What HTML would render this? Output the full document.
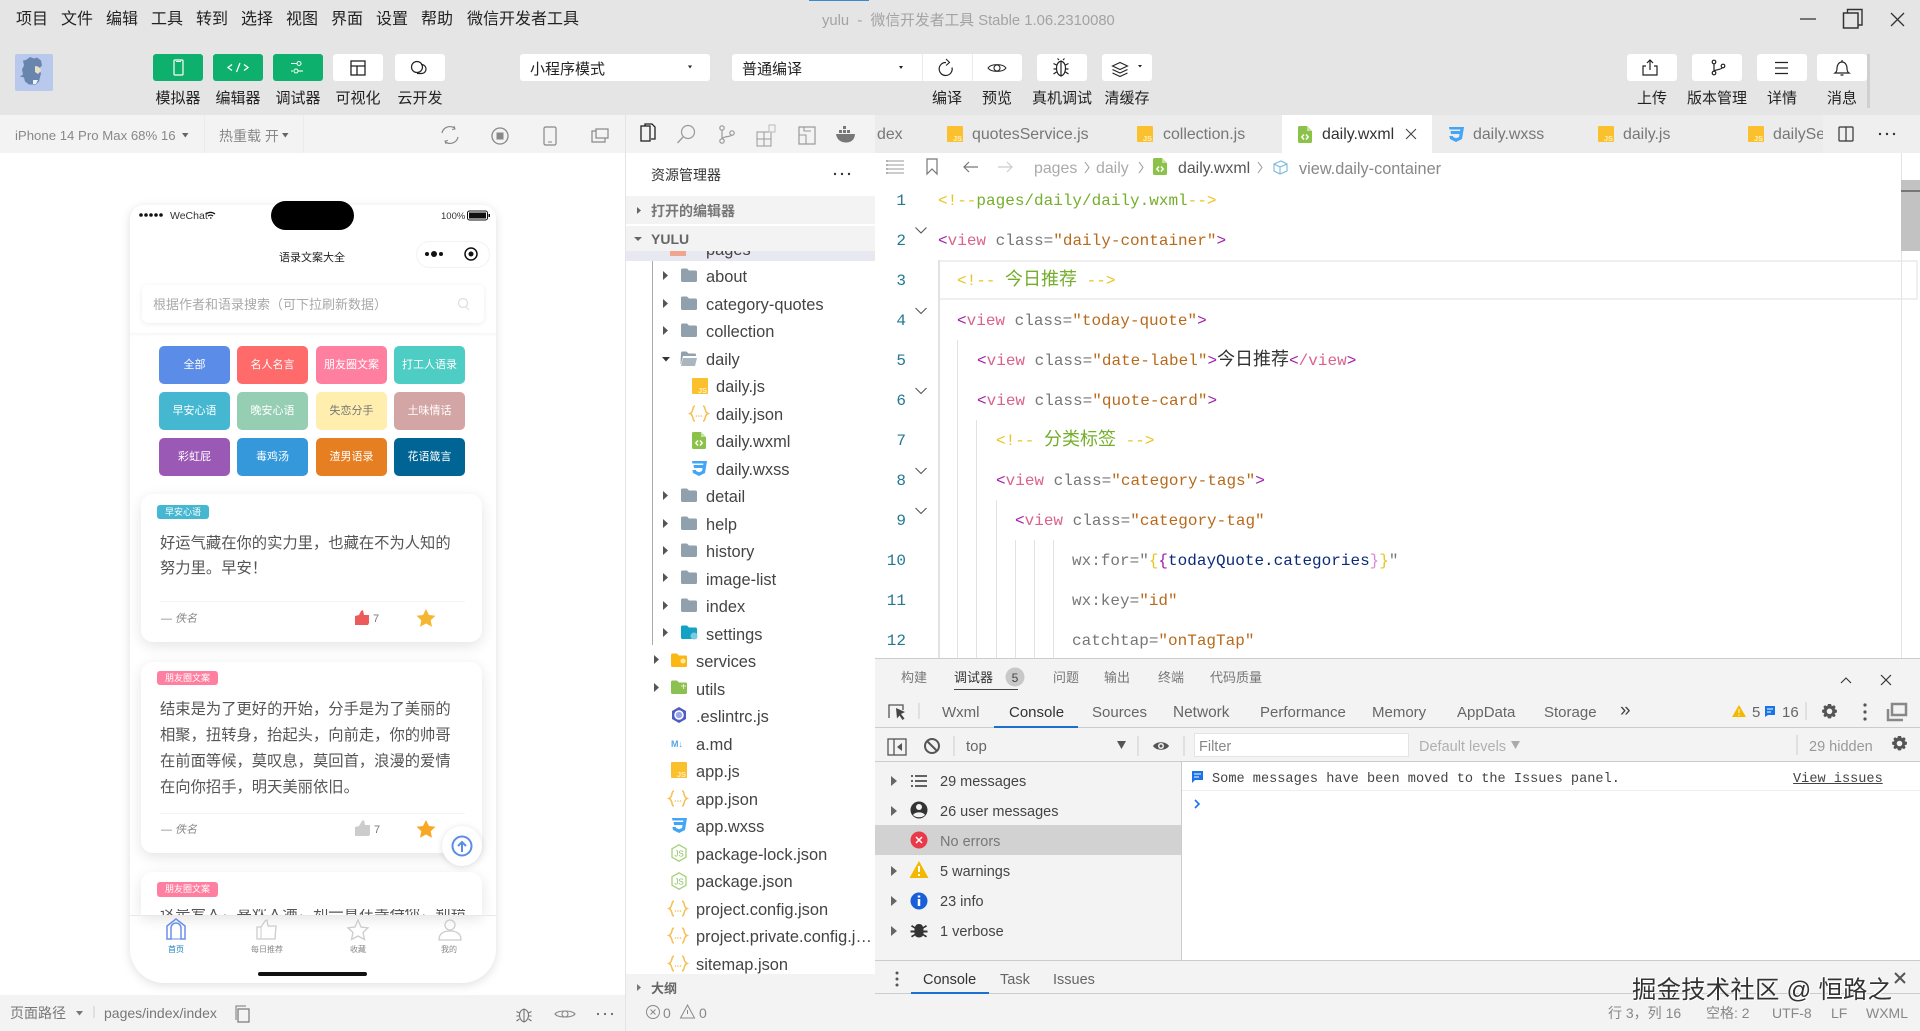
<!DOCTYPE html>
<html lang="zh"><head><meta charset="utf-8"><title>yulu</title>
<style>
*{box-sizing:border-box}
html,body{margin:0;padding:0;width:1920px;height:1031px;overflow:hidden;background:#fff;font-family:"Liberation Sans","Noto Sans CJK SC",sans-serif}
.b,.t{position:absolute}
.t{white-space:nowrap;line-height:20px;height:20px;margin-top:1px}
.c{transform:translateX(-50%)}
.m{font-size:16px;color:#222}
.l{font-size:15px;color:#222}
.g{background:#0eb06d;border-radius:3px}
.w{background:#fff;border-radius:3px}
.tab{font-size:15.9px;color:#777}
.tr{font-size:16.4px;color:#444;margin-top:2px}
.code{font-family:"Liberation Mono","Noto Sans CJK SC",monospace;font-size:16px;color:#777;line-height:24px;height:24px}
.num{font-family:"Liberation Mono",monospace;font-size:16px;color:#237893;text-align:right;width:40px;left:866px}
.cat{position:absolute;width:71px;height:38px;border-radius:5px;color:#fff;font-size:11px;line-height:39px;text-align:center}
.card{position:absolute;left:141px;width:341px;background:#fff;border-radius:12px;box-shadow:0 4px 14px rgba(0,0,0,.11)}
.q{font-size:15.3px;color:#555}
.dt{font-size:15px;color:#666}
.ct{font-size:14.5px;color:#444}
.z{margin-top:0}
i{font-style:normal}
.pu{color:#a01ea8}.pk{color:#d9638d}.or{color:#b86a1c}.ye{color:#e8c420}.gr{color:#74ae2a}.nv{color:#0b2a78}
.zh{font-size:18px}
</style></head><body>

<!-- backgrounds -->
<div class="b" style="left:0;top:0;width:1920px;height:115px;background:#e5e5e5"></div>
<div class="b" style="left:809px;top:0;width:60px;height:1px;background:#3b8ad0"></div>
<div class="b" style="left:0;top:115px;width:625px;height:38px;background:#f3f3f3"></div>
<div class="b" style="left:204px;top:115px;width:1px;height:38px;background:#ebebeb"></div>
<div class="b" style="left:303px;top:115px;width:1px;height:38px;background:#ebebeb"></div>
<div class="b" style="left:625px;top:115px;width:1px;height:916px;background:#e4e4e8"></div>
<div class="b" style="left:626px;top:115px;width:249px;height:38px;background:#f3f3f3"></div>
<div class="b" style="left:875px;top:115px;width:1045px;height:38px;background:#ececec"></div>
<div class="b" style="left:1282px;top:115px;width:150px;height:38px;background:#fff"></div>
<div class="b" style="left:1823px;top:115px;width:97px;height:38px;background:#efefef"></div>
<div class="b" style="left:0;top:995px;width:625px;height:36px;background:#f3f3f3"></div>

<!-- explorer backgrounds -->
<div class="b" style="left:626px;top:196px;width:249px;height:28px;background:#f3f3f3"></div>
<div class="b" style="left:626px;top:226px;width:249px;height:25px;background:#f3f3f3"></div>
<div class="b" style="left:626px;top:251px;width:249px;height:10px;overflow:hidden;background:#e8e8f0">
  <div class="t tr" style="left:80px;top:-13px">pages</div>
  <div class="b" style="left:44px;top:0;width:16px;height:5px;background:#f2a58e"></div>
</div>
<div class="b" style="left:626px;top:974px;width:249px;height:57px;background:#f3f3f3"></div>
<div class="b" style="left:652px;top:261px;width:1px;height:384px;background:#aaa"></div>

<!-- editor guides -->
<div class="b" style="left:938px;top:260px;width:2px;height:398px;background:#e2e2e2"></div>
<div class="b" style="left:957px;top:340px;width:1px;height:318px;background:#e2e2e2"></div>
<div class="b" style="left:976px;top:420px;width:1px;height:238px;background:#e2e2e2"></div>
<div class="b" style="left:996px;top:500px;width:1px;height:158px;background:#e2e2e2"></div>
<div class="b" style="left:1015px;top:540px;width:1px;height:118px;background:#e2e2e2"></div>
<div class="b" style="left:1034px;top:540px;width:1px;height:118px;background:#e2e2e2"></div>
<div class="b" style="left:1053px;top:540px;width:1px;height:118px;background:#e2e2e2"></div>
<div class="b" style="left:940px;top:260px;width:978px;height:40px;border:2px solid #efefef;border-left:none"></div>
<div class="b" style="left:1901px;top:153px;width:1px;height:505px;background:#e4e4e4"></div>
<div class="b" style="left:1901px;top:180px;width:19px;height:71px;background:#c2c2c2"></div>
<div class="b" style="left:1901px;top:190px;width:19px;height:2px;background:#777"></div>

<!-- devtools backgrounds -->
<div class="b" style="left:875px;top:658px;width:1045px;height:70px;background:#f3f3f3;border-top:1px solid #ccc;border-bottom:1px solid #ccc"></div>
<div class="b" style="left:875px;top:728px;width:1045px;height:34px;background:#f3f3f3;border-bottom:1px solid #ccc"></div>
<div class="b" style="left:875px;top:762px;width:307px;height:198px;background:#f3f3f3;border-right:1px solid #ccc"></div>
<div class="b" style="left:875px;top:825px;width:306px;height:30px;background:#d2d2d2"></div>
<div class="b" style="left:1182px;top:790px;width:738px;height:1px;background:#eee"></div>
<div class="b" style="left:875px;top:960px;width:1045px;height:34px;background:#f3f3f3;border-top:1px solid #ccc;border-bottom:1px solid #ccc"></div>
<div class="b" style="left:875px;top:994px;width:1045px;height:37px;background:#f3f3f3"></div>
<div class="b" style="left:954px;top:689px;width:64px;height:1px;background:#444"></div>
<div class="b" style="left:994px;top:726px;width:84px;height:2px;background:#1a6fd0"></div>
<div class="b" style="left:911px;top:992px;width:78px;height:2px;background:#1a6fd0"></div>
<div class="b" style="left:1194px;top:733px;width:215px;height:24px;background:#fff;border:1px solid #e4e4e4"></div>

<!-- toolbar buttons -->
<div class="b g" style="left:153px;top:54px;width:50px;height:27px"></div>
<div class="b g" style="left:213px;top:54px;width:50px;height:27px"></div>
<div class="b g" style="left:273px;top:54px;width:50px;height:27px"></div>
<div class="b w" style="left:333px;top:54px;width:50px;height:27px"></div>
<div class="b w" style="left:395px;top:54px;width:50px;height:27px"></div>
<div class="b w" style="left:520px;top:54px;width:190px;height:27px"></div>
<div class="b w" style="left:732px;top:54px;width:290px;height:27px"></div>
<div class="b" style="left:922px;top:54px;width:1px;height:27px;background:#eaeaea"></div>
<div class="b" style="left:972px;top:54px;width:1px;height:27px;background:#eaeaea"></div>
<div class="b w" style="left:1037px;top:54px;width:50px;height:27px"></div>
<div class="b w" style="left:1102px;top:54px;width:50px;height:27px"></div>
<div class="b w" style="left:1627px;top:54px;width:50px;height:27px"></div>
<div class="b w" style="left:1692px;top:54px;width:50px;height:27px"></div>
<div class="b w" style="left:1757px;top:54px;width:50px;height:27px"></div>
<div class="b w" style="left:1817px;top:54px;width:50px;height:27px"></div>
<div class="b" style="left:1867px;top:54px;width:3px;height:54px;background:#d0d0d0"></div>

<!-- phone -->
<div class="b" style="left:130px;top:205px;width:366px;height:778px;background:#fff;border-radius:14px 14px 34px 34px;box-shadow:0 2px 10px rgba(0,0,0,.13)"></div>
<div class="b" style="left:271px;top:201px;width:83px;height:29px;background:#000;border-radius:15px"></div>
<div class="b" style="left:416px;top:241px;width:74px;height:27px;background:#fff;border:1px solid #f2f2f2;border-radius:14px"></div>
<div class="b" style="left:142px;top:285px;width:342px;height:38px;background:#fff;border-radius:6px;box-shadow:0 1px 6px rgba(0,0,0,.08)"></div>
<div class="b" style="left:130px;top:333px;width:366px;height:4px;background:linear-gradient(#f6f6f6,#fff)"></div>

<div class="cat" style="left:159px;top:346px;background:#5b8de8">全部</div>
<div class="cat" style="left:237px;top:346px;background:#ff6b6b">名人名言</div>
<div class="cat" style="left:316px;top:346px;background:#ff7fa0">朋友圈文案</div>
<div class="cat" style="left:394px;top:346px;background:#4ecdc4">打工人语录</div>
<div class="cat" style="left:159px;top:392px;background:#45b7d1">早安心语</div>
<div class="cat" style="left:237px;top:392px;background:#96ceb4">晚安心语</div>
<div class="cat" style="left:316px;top:392px;background:#ffeead;color:#777">失恋分手</div>
<div class="cat" style="left:394px;top:392px;background:#d4a5a5">土味情话</div>
<div class="cat" style="left:159px;top:438px;background:#9b59b6">彩虹屁</div>
<div class="cat" style="left:237px;top:438px;background:#3498db">毒鸡汤</div>
<div class="cat" style="left:316px;top:438px;background:#e67e22">渣男语录</div>
<div class="cat" style="left:394px;top:438px;background:#006494">花语箴言</div>

<div class="card" style="top:494px;height:148px"></div>
<div class="card" style="top:662px;height:191px"></div>
<div class="card" style="top:872px;height:43px;border-radius:12px 12px 0 0"></div>
<div class="b" style="left:157px;top:505px;width:52px;height:14px;background:#45b7d1;border-radius:3px;color:#fff;font-size:9px;line-height:14px;text-align:center">早安心语</div>
<div class="b" style="left:157px;top:671px;width:61px;height:14px;background:#ff7fa0;border-radius:3px;color:#fff;font-size:9px;line-height:14px;text-align:center">朋友圈文案</div>
<div class="b" style="left:157px;top:882px;width:61px;height:15px;background:#ff7fa0;border-radius:3px;color:#fff;font-size:9px;line-height:15px;text-align:center">朋友圈文案</div>
<div class="b" style="left:160px;top:601px;width:305px;height:1px;background:#f4f4f4"></div>
<div class="b" style="left:160px;top:813px;width:305px;height:1px;background:#f4f4f4"></div>
<div class="t q" style="left:160px;top:533px">好运气藏在你的实力里，也藏在不为人知的</div>
<div class="t q" style="left:160px;top:558px">努力里。早安！</div>
<div class="t q" style="left:160px;top:699px">结束是为了更好的开始，分手是为了美丽的</div>
<div class="t q" style="left:160px;top:725px">相聚，扭转身，抬起头，向前走，你的帅哥</div>
<div class="t q" style="left:160px;top:751px">在前面等候，莫叹息，莫回首，浪漫的爱情</div>
<div class="t q" style="left:160px;top:777px">在向你招手，明天美丽依旧。</div>
<div class="b" style="left:160px;top:909px;width:305px;height:6px;overflow:hidden"><div class="t q" style="left:0;top:-6px">这是爱人，喜欢人满，却一直在等待你，别错过</div></div>
<div class="t" style="left:161px;top:608px;font-size:11px;font-style:italic;color:#888">— 佚名</div>
<div class="t" style="left:161px;top:819px;font-size:11px;font-style:italic;color:#888">— 佚名</div>
<div class="t" style="left:373px;top:608px;font-size:11px;color:#777">7</div>
<div class="t" style="left:374px;top:819px;font-size:11px;color:#777">7</div>
<div class="b" style="left:130px;top:915px;width:366px;height:1px;background:#e9e9e9"></div>
<div class="b" style="left:442px;top:826px;width:40px;height:40px;background:#fff;border-radius:50%;box-shadow:0 1px 7px rgba(0,0,0,.13)"></div>
<div class="b" style="left:258px;top:972px;width:109px;height:4px;background:#111;border-radius:2px"></div>

<!-- icons -->
<svg class="b" style="left:0;top:0" width="1920" height="1031" viewBox="0 0 1920 1031" fill="none">
<defs>
<g id="folder"><path d="M0 2a1.5 1.5 0 0 1 1.5-1.5h4.500l2 2h6.500a1.500 1.500 0 0 1 1.500 1.500v8.500a1.500 1.500 0 0 1-1.500 1.500h-13a1.500 1.500 0 0 1-1.500-1.500z" fill="#90a0ac"/></g>
<g id="js"><rect width="16" height="16" rx="1" fill="#fbc02d"/><text x="15" y="15" text-anchor="end" font-size="7.500" font-family="Liberation Sans" fill="#fff2c0" font-weight="bold">JS</text></g>
<g id="json"><path d="M6 1C3 1 5 7 1 8.500C5 10 3 16 6 16M14 1C17 1 15 7 19 8.500C15 10 17 16 14 16" stroke="#f5bf52" stroke-width="1.500"/><circle cx="7.500" cy="11" r=".8" fill="#f5bf52"/><circle cx="10" cy="11" r=".8" fill="#f5bf52"/><circle cx="12.500" cy="11" r=".8" fill="#f5bf52"/></g>
<g id="wxml"><path d="M0 1.500a1.500 1.500 0 0 1 1.500-1.500h7.500l5 5v10.500a1.500 1.500 0 0 1-1.500 1.500h-11a1.500 1.500 0 0 1-1.500-1.500z" fill="#8bc34a"/><path d="M9 0v5h5" fill="#c5e1a5"/><path d="M6 8.500L3.800 11L6 13.500M8 8.500L10.200 11L8 13.500" stroke="#fff" stroke-width="1.400"/></g>
<g id="wxss"><path d="M1 1h15l-2 12-6 3-6-3-.6-3h3.500l.2 1 3 1.300 3-1.300.4-3H3l-.5-3h9.600l.3-1.500H1.500z" fill="#42a5f5"/></g>
<g id="node"><path d="M8 0.800L15 4.800V13.200L8 17.200L1 13.200V4.800Z" stroke="#a5d27a" stroke-width="1.300"/><text x="8" y="12.500" text-anchor="middle" font-size="8" font-family="Liberation Sans" fill="#8bc060">JS</text></g>
<path id="chev" d="M0 0L5.500 5.500L11 0" stroke="#555" stroke-width="1.100"/>
<path id="tri" d="M0 0L5 4.500L0 9z" fill="#555"/>
</defs>

<!-- avatar -->
<rect x="15" y="54" width="38" height="37" rx="2" fill="#b9c9ee"/>
<path d="M26 60l4-3 4 1.500 3-1 4 3 1 5-3 3 2 5-2 8-3 3h-7l-4-3-1-4-4-1 3-2-1-5 2-4-1-5z" fill="#6885ad"/>
<path d="M35 66c3 0 6 2 6 5l-3 3-3-2z" fill="#e9e0c6"/><path d="M33 80h5l-2 4h-3z" fill="#eef2fa"/>

<!-- toolbar icons -->
<rect x="174" y="60" width="9" height="15" rx="1" stroke="#fff" stroke-width="1.200"/><path d="M176 61.500h5" stroke="#fff"/>
<path d="M232 64.500l-4 3 4 3M244 64.500l4 3-4 3M240 63l-3.500 9" stroke="#fff" stroke-width="1.300"/>
<path d="M291 63.500h6M291 71h2" stroke="#fff" stroke-width="1.100"/><circle cx="299" cy="63.500" r="2" stroke="#fff"/><circle cx="296" cy="71" r="2" stroke="#fff"/><path d="M298 71h5" stroke="#fff" stroke-width="1.100"/>
<rect x="351" y="61" width="14" height="14" stroke="#222" stroke-width="1.300"/><path d="M351 66h14M357 66v9" stroke="#222" stroke-width="1.300"/>
<circle cx="417" cy="67" r="5.500" stroke="#222" stroke-width="1.200"/><path d="M421 64.500a4 4 0 1 1 1 9h-5" stroke="#222" stroke-width="1.200"/>
<path d="M688 65.500h4l-2 3z" fill="#222"/><path d="M899 66h4l-2 3z" fill="#222"/>
<path d="M946 62.500a6.500 6.500 0 1 0 6 5" stroke="#222" stroke-width="1.200"/><path d="M946 59l3.500 3.500-3.500 3" stroke="#222" stroke-width="1.100"/>
<path d="M988 68c3-4.500 15-4.500 18 0c-3 4.500-15 4.500-18 0z" stroke="#222" stroke-width="1.100"/><circle cx="997" cy="68" r="3" stroke="#222" stroke-width="1.100"/>
<path d="M1061 61c-3 1-4.500 3-4.500 7s1.500 7 4.500 8c3-1 4.500-4 4.500-8s-1.500-6-4.500-7zM1061 61v15M1059 60l-1.500-1.500M1063 60l1.500-1.500M1056.500 65l-3-1.500M1065.500 65l3-1.500M1056.500 69h-3M1065.500 69h3M1056.500 72l-3 2M1065.500 72l3 2" stroke="#222" stroke-width="1.200"/>
<path d="M1120 62.500l-7.500 3.500 7.500 3.500 7.500-3.500zM1112.500 69.500l7.500 3.500 7.500-3.500M1112.500 73l7.500 3.500 7.500-3.500" stroke="#222" stroke-width="1.100"/>
<path d="M1138 65h4l-2 2.500z" fill="#222"/>
<path d="M1646 66h-3v9h14v-9h-3M1650 70v-10M1647 63l3-3 3 3" stroke="#222" stroke-width="1.200"/>
<circle cx="1714" cy="62" r="1.800" stroke="#222" stroke-width="1.200"/><circle cx="1714" cy="73" r="1.800" stroke="#222" stroke-width="1.200"/><circle cx="1723" cy="66" r="1.800" stroke="#222" stroke-width="1.200"/><path d="M1714 64v7M1714 71c3-2 7-1 8.500-3.500" stroke="#222" stroke-width="1.200"/>
<path d="M1775 62.500h13M1775 68h13M1775 73.500h13" stroke="#222" stroke-width="1.200"/>
<path d="M1835 73h14c-1.500-1-2-2-2-5c0-3-2-6-5-6s-5 3-5 6c0 3-.5 4-2 5zM1842 60v2M1840.500 75h3" stroke="#222" stroke-width="1.200"/>

<!-- window controls -->
<path d="M1800 19h16" stroke="#444" stroke-width="1.400"/>
<rect x="1843.500" y="13" width="14.500" height="15" stroke="#333" stroke-width="1.500"/><path d="M1847.500 13v-3.500h14.500v15.500h-4" stroke="#333" stroke-width="1.400"/>
<path d="M1891 13l13 13M1904 13l-13 13" stroke="#333" stroke-width="1.300"/>

<!-- sim bar icons -->
<path d="M182 133h6.500l-3.200 4.500z" fill="#666"/>
<path d="M282 133h6.500l-3.200 4.500z" fill="#666"/>
<path d="M442 133a8 8 0 0 1 13-4.500M458 137a8 8 0 0 1-13 4.500" stroke="#888" stroke-width="1.200"/><path d="M454 126l1 3-3 .5M446 144l-1-3 3-.5" stroke="#888"/>
<circle cx="500" cy="136" r="8" stroke="#888" stroke-width="1.300"/><rect x="496.500" y="132.500" width="7" height="7" fill="#888"/>
<rect x="544" y="127" width="12" height="18" rx="1.500" stroke="#888" stroke-width="1.200"/><path d="M548 142h4" stroke="#888"/>
<path d="M596 131h-4v11h13v-4" stroke="#888" stroke-width="1.200"/><rect x="596" y="129" width="12" height="9" stroke="#888" stroke-width="1.200"/>

<!-- activity bar -->
<rect x="641" y="126" width="9" height="15" stroke="#222" stroke-width="1.300"/><path d="M645 126v-2h7l3 3v12h-4" stroke="#222" stroke-width="1.300"/>
<circle cx="688" cy="132" r="6.500" stroke="#999" stroke-width="1.200"/><path d="M683 137l-5.500 6" stroke="#999" stroke-width="1.300"/>
<circle cx="722" cy="128" r="2.200" stroke="#999" stroke-width="1.200"/><circle cx="722" cy="141" r="2.200" stroke="#999" stroke-width="1.200"/><circle cx="732" cy="133" r="2.200" stroke="#999" stroke-width="1.200"/><path d="M722 130v9M722 139c1-3 9-2 10-4" stroke="#999" stroke-width="1.200"/>
<rect x="757" y="132" width="7" height="7" stroke="#999"/><rect x="757" y="139" width="7" height="7" stroke="#999"/><rect x="764" y="132" width="7" height="7" stroke="#999"/><rect x="764" y="139" width="7" height="7" stroke="#999"/><rect x="769" y="125" width="6" height="7" stroke="#bbb"/>
<rect x="799" y="127" width="16" height="17" stroke="#999" stroke-width="1.200"/><path d="M799 135h7v9M804 127v4h7" stroke="#999" stroke-width="1.100"/>
<path d="M836 134h19c-.5 6-4 8.500-9 8.500s-9-2.500-10-8.500z" fill="#777"/><rect x="839" y="130" width="3" height="3" fill="#777"/><rect x="843" y="130" width="3" height="3" fill="#777"/><rect x="847" y="130" width="3" height="3" fill="#777"/><rect x="843" y="126" width="3" height="3" fill="#777"/>

<!-- explorer headers -->
<circle cx="835" cy="174" r="1.200" fill="#333"/><circle cx="842" cy="174" r="1.200" fill="#333"/><circle cx="849" cy="174" r="1.200" fill="#333"/>
<path d="M637 207l4 3.500-4 3.500z" fill="#666"/><path d="M634 237h8l-4 4z" fill="#666"/>

<!-- tree arrows+folders -->
<use href="#tri" x="663" y="271"/><use href="#folder" x="681" y="268"/>
<use href="#tri" x="663" y="299"/><use href="#folder" x="681" y="296"/>
<use href="#tri" x="663" y="326"/><use href="#folder" x="681" y="323"/>
<path d="M662 357h8l-4 4.500z" fill="#333"/><path d="M681 353a1.500 1.500 0 0 1 1.500-1.500h4l2 2h6a1.500 1.500 0 0 1 1.500 1.500v1h-13l-2 8h-.5z" fill="#90a0ac"/><path d="M683 358h14l-2 8h-14z" fill="#a9b5bf"/>
<use href="#js" x="692" y="378"/><use href="#json" x="689" y="405"/><use href="#wxml" x="692" y="432"/><use href="#wxss" x="691" y="460"/>
<use href="#tri" x="663" y="491"/><use href="#folder" x="681" y="488"/>
<use href="#tri" x="663" y="519"/><use href="#folder" x="681" y="516"/>
<use href="#tri" x="663" y="546"/><use href="#folder" x="681" y="543"/>
<use href="#tri" x="663" y="573"/><use href="#folder" x="681" y="570"/>
<use href="#tri" x="663" y="601"/><use href="#folder" x="681" y="598"/>
<use href="#tri" x="663" y="628"/><path d="M681 627a1.500 1.500 0 0 1 1.500-1.500h4.500l2 2h6.500a1.500 1.500 0 0 1 1.500 1.500v8.500a1.500 1.500 0 0 1-1.500 1.500h-13a1.500 1.500 0 0 1-1.500-1.500z" fill="#12a3c4"/><circle cx="694" cy="636" r="3.500" fill="#7cc9e0"/>
<use href="#tri" x="654" y="655"/><path d="M671 655a1.500 1.500 0 0 1 1.500-1.500h4.500l2 2h6.500a1.500 1.500 0 0 1 1.500 1.500v8.500a1.500 1.500 0 0 1-1.500 1.500h-13a1.500 1.500 0 0 1-1.500-1.500z" fill="#fbb714"/><circle cx="683" cy="661" r="2.500" fill="#ffe7a8"/>
<use href="#tri" x="654" y="683"/><path d="M671 682a1.500 1.500 0 0 1 1.500-1.500h4.500l2 2h6.500a1.500 1.500 0 0 1 1.500 1.500v8.500a1.500 1.500 0 0 1-1.500 1.500h-13a1.500 1.500 0 0 1-1.500-1.500z" fill="#8cc152"/><path d="M681 686h5M683.500 684v5" stroke="#dff0c8"/>
<path d="M679 707L686 711V719L679 723L672 719V711Z" fill="#4f5cc2"/><circle cx="679" cy="715" r="4" stroke="#fff" stroke-width="1.500" fill="#9aa5e8"/>
<text x="671" y="747" font-size="9" font-weight="bold" font-family="Liberation Sans" fill="#55a5e5">M↓</text>
<use href="#js" x="671" y="762"/><use href="#json" x="668" y="790"/><use href="#wxss" x="671" y="817"/>
<use href="#node" x="671" y="844"/><use href="#node" x="671" y="872"/>
<use href="#json" x="668" y="900"/><use href="#json" x="668" y="927"/><use href="#json" x="668" y="955"/>
<path d="M637 984l4 3.500-4 3.500z" fill="#777"/>
<circle cx="653" cy="1012" r="6.500" stroke="#888" stroke-width="1"/><path d="M650.500 1009.500l5 5M655.500 1009.500l-5 5" stroke="#888"/>
<path d="M687.500 1005L694.500 1018H680.500Z" stroke="#888" stroke-width="1"/><path d="M687.500 1010v4" stroke="#888"/>

<!-- tabs icons -->
<use href="#js" x="947" y="126"/><use href="#js" x="1137" y="126"/>
<use href="#wxml" x="1298" y="126"/><path d="M1406 129l10 10M1416 129l-10 10" stroke="#444" stroke-width="1.100"/>
<use href="#wxss" x="1448" y="126"/><use href="#js" x="1598" y="126"/><use href="#js" x="1748" y="126"/>
<rect x="1839" y="127" width="14" height="14" rx="1" stroke="#333" stroke-width="1.200"/><path d="M1846 127v14" stroke="#333" stroke-width="1.200"/>
<circle cx="1880" cy="134" r="1.200" fill="#333"/><circle cx="1887" cy="134" r="1.200" fill="#333"/><circle cx="1894" cy="134" r="1.200" fill="#333"/>

<!-- breadcrumb -->
<path d="M886 161h18M886 165h18M886 169h18M886 173h18" stroke="#999" stroke-width="1.100"/><path d="M886 161h2M886 165h2M886 169h2M886 173h2" stroke="#666" stroke-width="1.100"/>
<path d="M927 159h10v15l-5-5-5 5z" stroke="#777" stroke-width="1.200"/>
<path d="M978 167h-14M969 162l-5 5 5 5" stroke="#777" stroke-width="1.200"/>
<path d="M998 167h14M1007 162l5 5-5 5" stroke="#ccc" stroke-width="1.200"/>
<path d="M1085 162l4 5.500-4 5.500M1139 162l4 5.500-4 5.500M1258 162l4 5.500-4 5.500" stroke="#999" stroke-width="1"/>
<use href="#wxml" x="1153" y="158"/>
<path d="M1274 164l7-3 6 3v7l-7 3-6-3zM1274 164l6 3 7-3M1280 167v7" stroke="#79b8dc" stroke-width="1.100"/>

<!-- fold chevrons -->
<use href="#chev" x="915.500" y="227.500"/><use href="#chev" x="915.500" y="308"/><use href="#chev" x="915.500" y="388"/><use href="#chev" x="915.500" y="468"/><use href="#chev" x="915.500" y="508"/>

<!-- phone icons -->
<circle cx="141" cy="215" r="1.800" fill="#111"/><circle cx="146" cy="215" r="1.800" fill="#111"/><circle cx="151" cy="215" r="1.800" fill="#111"/><circle cx="156" cy="215" r="1.800" fill="#111"/><circle cx="161" cy="215" r="1.800" fill="#111"/>
<path d="M206 214a7 7 0 0 1 9 0M208 216a4 4 0 0 1 5 0M210 218h1.500" stroke="#111" stroke-width="1.200"/>
<rect x="467.500" y="211" width="20" height="9" rx="2" stroke="#111"/><rect x="469" y="212.500" width="17" height="6" fill="#111"/><rect x="488.500" y="214" width="1.500" height="3" fill="#111"/>
<circle cx="427" cy="254" r="2" fill="#111"/><circle cx="434" cy="254" r="3" fill="#111"/><circle cx="441" cy="254" r="2" fill="#111"/>
<circle cx="471" cy="254" r="6" stroke="#111" stroke-width="1.500"/><circle cx="471" cy="254" r="2.500" fill="#111"/>
<circle cx="463" cy="303" r="4.500" stroke="#ddd" stroke-width="1.200"/><path d="M466 307l3 3" stroke="#ddd"/>
<!-- like/star -->
<path d="M355 616l4-1 2-4 2-1 1 5h5v8l-1 2h-13z" fill="#ec5a5a"/>
<path d="M426 609l3 6 6.500.8-4.800 4.400 1.300 6.500-6-3.200-6 3.200 1.300-6.500-4.800-4.400 6.500-.8z" fill="#f5b731"/>
<path d="M355 827l4-1 3-5 2-1 1 5h5v9l-1 2h-14z" fill="#ccc"/>
<path d="M426 820l3 6 6.500.8-4.800 4.400 1.300 6.500-6-3.200-6 3.200 1.300-6.500-4.800-4.400 6.500-.8z" fill="#f9a825"/>
<circle cx="462" cy="846" r="9.500" stroke="#5b8de8" stroke-width="2"/><path d="M462 852v-9M458 846l4-4 4 4" stroke="#5b8de8" stroke-width="2"/>
<!-- tabbar -->
<path d="M167 939v-13l9-7 9 7v13h-4v-11a5 5 0 0 0-10 0v11z" stroke="#6a90e8" stroke-width="1.500"/><path d="M171 939h10" stroke="#6a90e8"/>
<path d="M257 927h4l4-6 2-1 1 6h8l-1 13h-18z" stroke="#ccc" stroke-width="1.300"/><path d="M261 927v12" stroke="#ccc"/>
<path d="M358 920l3 7 7 .8-5 4.700 1.500 7-6.500-3.500-6.500 3.500 1.500-7-5-4.700 7-.8z" stroke="#ccc" stroke-width="1.300"/>
<circle cx="450" cy="925" r="5" stroke="#ccc" stroke-width="1.300"/><path d="M439 940c0-7 5-9 11-9s11 2 11 9z" stroke="#ccc" stroke-width="1.300"/>
<!-- sim bottom -->
<path d="M76 1011h7l-3.500 4.500z" fill="#777"/><path d="M94 1006v12" stroke="#ccc"/>
<rect x="238" y="1009" width="11" height="13" stroke="#777" stroke-width="1.200"/><path d="M236 1020v-14h10" stroke="#777" stroke-width="1"/>
<path d="M524 1009c-3 1-4.500 3-4.500 6s1.500 6 4.500 7c3-1 4.500-4 4.500-7s-1.500-5-4.500-6zM524 1009v13M519.500 1013l-3-1.500M528.500 1013l3-1.500M519.500 1016h-3M528.500 1016h3M519.500 1019l-3 2M528.500 1019l3 2" stroke="#777" stroke-width="1.100"/>
<path d="M555 1014c3-4 17-4 20 0c-3 4-17 4-20 0z" stroke="#888" stroke-width="1.100"/><circle cx="565" cy="1014" r="3" stroke="#888" stroke-width="1.100"/>
<circle cx="598" cy="1014" r="1.100" fill="#666"/><circle cx="605" cy="1014" r="1.100" fill="#666"/><circle cx="612" cy="1014" r="1.100" fill="#666"/>

<!-- devtools icons -->
<circle cx="1015" cy="677" r="9.500" fill="#c8c8c8"/>
<path d="M1841 683l5-5 5 5" stroke="#333" stroke-width="1.100"/><path d="M1881 675l10 10M1891 675l-10 10" stroke="#333" stroke-width="1.200"/>
<path d="M889 718v-13h14v5" stroke="#555" stroke-width="1.300"/><path d="M896 708l9 4-4 2 3.500 4.500-2 1.500-3-4.500-2.500 3z" fill="#444"/>
<path d="M919 703v16" stroke="#ccc"/>
<path d="M1739 705l7 12h-14z" fill="#f3b800"/><path d="M1739 709v4M1739 714.500v1.200" stroke="#fff"/>
<path d="M1765 706h10v9h-7l-3 2z" fill="#1a73e8"/><path d="M1767 709h6M1767 712h4" stroke="#fff"/>
<path d="M1806 702v18" stroke="#ccc"/>
<g fill="#555"><path d="M1829 704l2 0 .8 2.300 2.300-1 1.500 1.500-1 2.300 2.300.8v2.600l-2.300.8 1 2.300-1.500 1.500-2.300-1-.8 2.300h-3l-.8-2.300-2.300 1-1.500-1.500 1-2.300-2.300-.8v-2.600l2.300-.8-1-2.300 1.500-1.500 2.300 1 .8-2.300z"/></g><circle cx="1829.500" cy="711.300" r="2.800" fill="#f3f3f3"/>
<circle cx="1865" cy="705" r="1.600" fill="#555"/><circle cx="1865" cy="712" r="1.600" fill="#555"/><circle cx="1865" cy="719" r="1.600" fill="#555"/>
<path d="M1888 709v11h15" stroke="#888" stroke-width="2.500"/><rect x="1892" y="704" width="14" height="11" stroke="#888" stroke-width="2.500"/>
<rect x="888" y="739" width="18" height="16" stroke="#555" stroke-width="1.300"/><path d="M894 739v16" stroke="#555" stroke-width="1.300"/><path d="M902 743v8l-5-4z" fill="#555"/>
<circle cx="932" cy="746" r="7" stroke="#555" stroke-width="2"/><path d="M927 741l10 10" stroke="#555" stroke-width="2"/>
<path d="M954 736v20M1138 736v20M1184 736v20M1797 735v20" stroke="#ccc"/>
<path d="M1117 741h9l-4.500 8z" fill="#555"/>
<path d="M1153 746c3-5 13-5 16 0c-3 5-13 5-16 0z" fill="#555"/><circle cx="1161" cy="746" r="3" fill="#f3f3f3"/><circle cx="1161" cy="746" r="1.500" fill="#555"/>
<path d="M1511 741h9l-4.500 8z" fill="#aaa"/>
<g fill="#555"><path d="M1899 736l2 0 .8 2.300 2.300-1 1.500 1.500-1 2.300 2.300.8v2.600l-2.300.8 1 2.300-1.500 1.500-2.300-1-.8 2.300h-3l-.8-2.300-2.300 1-1.500-1.500 1-2.300-2.300-.8v-2.600l2.300-.8-1-2.300 1.500-1.500 2.300 1 .8-2.300z"/></g><circle cx="1899.500" cy="743.500" r="2.800" fill="#f3f3f3"/>
<!-- list arrows -->
<path d="M891 776l6 5-6 5zM891 806l6 5-6 5zM891 866l6 5-6 5zM891 896l6 5-6 5zM891 926l6 5-6 5z" fill="#666"/>
<path d="M911 776h2M915 776h12M911 781h2M915 781h12M911 786h2M915 786h12" stroke="#333" stroke-width="1.600"/>
<circle cx="919" cy="810" r="8.500" fill="#333"/><circle cx="919" cy="807" r="3" fill="#f3f3f3"/><path d="M913 815c2-3.500 10-3.500 12 0c-3 3-9 3-12 0z" fill="#f3f3f3"/>
<circle cx="919" cy="840" r="8.500" fill="#ea3a4a"/><path d="M916 837l6 6M922 837l-6 6" stroke="#fff" stroke-width="1.500"/>
<path d="M919 861l9.500 17h-19z" fill="#f3b800"/><path d="M919 866v6M919 874v2" stroke="#fff" stroke-width="2"/>
<circle cx="919" cy="901" r="8.500" fill="#1a5fd8"/><path d="M919 899v7M919 895.500v2" stroke="#fff" stroke-width="2.500"/>
<path d="M919 924a4 4 0 0 1 4 3l3-2 1 1.500-3.500 2v2h4v2h-4v1.500l3.500 2-1 1.500-3-2c-1 1.500-3 2-4 2s-3-.5-4-2l-3 2-1-1.500 3.500-2v-1.500h-4v-2h4v-2l-3.500-2 1-1.500 3 2a4 4 0 0 1 4-3z" fill="#333"/>
<path d="M1192 771h11v9h-8l-3 3z" fill="#1a73e8"/><path d="M1194 774h7M1194 777h5" stroke="#fff"/>
<path d="M1195 800l4 4-4 4" stroke="#1a73e8" stroke-width="1.600"/>
<circle cx="897" cy="973" r="1.500" fill="#555"/><circle cx="897" cy="979" r="1.500" fill="#555"/><circle cx="897" cy="985" r="1.500" fill="#555"/>
<path d="M1895 973l10 10M1905 973l-10 10" stroke="#555" stroke-width="2"/>
</svg>

<!-- menu -->
<div class="t m" style="left:16px;top:9px">项目</div><div class="t m" style="left:61px;top:9px">文件</div><div class="t m" style="left:106px;top:9px">编辑</div><div class="t m" style="left:151px;top:9px">工具</div><div class="t m" style="left:196px;top:9px">转到</div><div class="t m" style="left:241px;top:9px">选择</div><div class="t m" style="left:286px;top:9px">视图</div><div class="t m" style="left:331px;top:9px">界面</div><div class="t m" style="left:376px;top:9px">设置</div><div class="t m" style="left:421px;top:9px">帮助</div><div class="t m" style="left:467px;top:9px">微信开发者工具</div>
<div class="t" style="left:822px;top:10px;font-size:14.8px;color:#a3a3a3">yulu &nbsp;-&nbsp; 微信开发者工具 Stable 1.06.2310080</div>

<!-- toolbar labels -->
<div class="t l c" style="left:178px;top:88px">模拟器</div><div class="t l c" style="left:238px;top:88px">编辑器</div><div class="t l c" style="left:298px;top:88px">调试器</div><div class="t l c" style="left:358px;top:88px">可视化</div><div class="t l c" style="left:420px;top:88px">云开发</div>
<div class="t l" style="left:530px;top:59px">小程序模式</div><div class="t l" style="left:742px;top:59px">普通编译</div>
<div class="t l c" style="left:947px;top:88px">编译</div><div class="t l c" style="left:997px;top:88px">预览</div><div class="t l c" style="left:1062px;top:88px">真机调试</div><div class="t l c" style="left:1127px;top:88px">清缓存</div>
<div class="t l c" style="left:1652px;top:88px">上传</div><div class="t l c" style="left:1717px;top:88px">版本管理</div><div class="t l c" style="left:1782px;top:88px">详情</div><div class="t l c" style="left:1842px;top:88px">消息</div>

<!-- sim bar -->
<div class="t" style="left:15px;top:125px;font-size:13.2px;color:#888">iPhone 14 Pro Max 68% 16</div>
<div class="t" style="left:219px;top:125px;font-size:14px;color:#888">热重载 开</div>

<!-- phone text -->
<div class="t" style="left:170px;top:205px;font-size:10.500px;color:#333">WeChat</div>
<div class="t" style="left:441px;top:206px;font-size:9.500px;color:#333">100%</div>
<div class="t c" style="left:312px;top:247px;font-size:11px;color:#222">语录文案大全</div>
<div class="t" style="left:153px;top:294px;font-size:13px;color:#a9a9a9">根据作者和语录搜索（可下拉刷新数据）</div>
<div class="t c" style="left:176px;top:939px;font-size:8px;color:#1a7fc0">首页</div>
<div class="t c" style="left:267px;top:939px;font-size:8px;color:#888">每日推荐</div>
<div class="t c" style="left:358px;top:939px;font-size:8px;color:#888">收藏</div>
<div class="t c" style="left:449px;top:939px;font-size:8px;color:#888">我的</div>

<div class="t z" style="left:10px;top:1003px;font-size:14px;color:#777">页面路径</div>
<div class="t z" style="left:104px;top:1003px;font-size:14px;color:#777">pages/index/index</div>

<!-- explorer text -->
<div class="t z" style="left:651px;top:165px;font-size:14px;color:#333">资源管理器</div>
<div class="t" style="left:651px;top:200px;font-size:14px;font-weight:bold;color:#777">打开的编辑器</div>
<div class="t z" style="left:651px;top:229px;font-size:14px;font-weight:bold;color:#666">YULU</div>
<div class="t tr" style="left:706px;top:265px">about</div>
<div class="t tr" style="left:706px;top:293px">category-quotes</div>
<div class="t tr" style="left:706px;top:320px">collection</div>
<div class="t tr" style="left:706px;top:348px">daily</div>
<div class="t tr" style="left:716px;top:375px">daily.js</div>
<div class="t tr" style="left:716px;top:403px">daily.json</div>
<div class="t tr" style="left:716px;top:430px">daily.wxml</div>
<div class="t tr" style="left:716px;top:458px">daily.wxss</div>
<div class="t tr" style="left:706px;top:485px">detail</div>
<div class="t tr" style="left:706px;top:513px">help</div>
<div class="t tr" style="left:706px;top:540px">history</div>
<div class="t tr" style="left:706px;top:568px">image-list</div>
<div class="t tr" style="left:706px;top:595px">index</div>
<div class="t tr" style="left:706px;top:623px">settings</div>
<div class="t tr" style="left:696px;top:650px">services</div>
<div class="t tr" style="left:696px;top:678px">utils</div>
<div class="t tr" style="left:696px;top:705px">.eslintrc.js</div>
<div class="t tr" style="left:696px;top:733px">a.md</div>
<div class="t tr" style="left:696px;top:760px">app.js</div>
<div class="t tr" style="left:696px;top:788px">app.json</div>
<div class="t tr" style="left:696px;top:815px">app.wxss</div>
<div class="t tr" style="left:696px;top:843px">package-lock.json</div>
<div class="t tr" style="left:696px;top:870px">package.json</div>
<div class="t tr" style="left:696px;top:898px">project.config.json</div>
<div class="t tr" style="left:696px;top:925px;width:178px;overflow:hidden;text-overflow:ellipsis">project.private.config.json</div>
<div class="t tr" style="left:696px;top:953px">sitemap.json</div>
<div class="t z" style="left:651px;top:979px;font-size:13px;font-weight:bold;color:#666">大纲</div>
<div class="t" style="left:663px;top:1002px;font-size:14px;color:#888">0</div>
<div class="t" style="left:699px;top:1002px;font-size:14px;color:#888">0</div>

<!-- tabs -->
<div class="t tab" style="left:877px;top:124px">dex</div>
<div class="t tab" style="left:972px;top:124px">quotesService.js</div>
<div class="t tab" style="left:1163px;top:124px">collection.js</div>
<div class="t tab" style="left:1322px;top:124px;color:#333">daily.wxml</div>
<div class="t tab" style="left:1473px;top:124px">daily.wxss</div>
<div class="t tab" style="left:1623px;top:124px">daily.js</div>
<div class="t tab" style="left:1773px;top:124px;width:50px;overflow:hidden">dailySe</div>

<div class="t tab" style="left:1034px;top:158px;color:#aaa">pages</div>
<div class="t tab" style="left:1096px;top:158px;color:#aaa">daily</div>
<div class="t tab" style="left:1178px;top:158px;color:#555">daily.wxml</div>
<div class="t tab" style="left:1299px;top:158px;color:#888;font-size:16.3px">view.daily-container</div>

<!-- code -->
<div class="t num" style="top:190px">1</div><div class="t num" style="top:230px">2</div><div class="t num" style="top:270px">3</div><div class="t num" style="top:310px">4</div><div class="t num" style="top:350px">5</div><div class="t num" style="top:390px">6</div><div class="t num" style="top:430px">7</div><div class="t num" style="top:470px">8</div><div class="t num" style="top:510px">9</div><div class="t num" style="top:550px">10</div><div class="t num" style="top:590px">11</div><div class="t num" style="top:630px">12</div>

<div class="t code" style="left:938px;top:188px"><i class="ye">&lt;!--</i><i class="gr">pages/daily/daily.wxml</i><i class="ye">--&gt;</i></div>
<div class="t code" style="left:938px;top:228px"><i class="pu">&lt;</i><i class="pk">view</i> class=<i class="or">"daily-container"</i><i class="pu">&gt;</i></div>
<div class="t code" style="left:957px;top:268px"><i class="ye">&lt;!-- </i><i class="gr zh">今日推荐</i><i class="ye"> --&gt;</i></div>
<div class="t code" style="left:957px;top:308px"><i class="pu">&lt;</i><i class="pk">view</i> class=<i class="or">"today-quote"</i><i class="pu">&gt;</i></div>
<div class="t code" style="left:977px;top:348px"><i class="pu">&lt;</i><i class="pk">view</i> class=<i class="or">"date-label"</i><i class="pu">&gt;</i><i class="zh" style="color:#333">今日推荐</i><i class="pu">&lt;</i><i class="pk">/view</i><i class="pu">&gt;</i></div>
<div class="t code" style="left:977px;top:388px"><i class="pu">&lt;</i><i class="pk">view</i> class=<i class="or">"quote-card"</i><i class="pu">&gt;</i></div>
<div class="t code" style="left:996px;top:428px"><i class="ye">&lt;!-- </i><i class="gr zh">分类标签</i><i class="ye"> --&gt;</i></div>
<div class="t code" style="left:996px;top:468px"><i class="pu">&lt;</i><i class="pk">view</i> class=<i class="or">"category-tags"</i><i class="pu">&gt;</i></div>
<div class="t code" style="left:1015px;top:508px"><i class="pu">&lt;</i><i class="pk">view</i> class=<i class="or">"category-tag"</i></div>
<div class="t code" style="left:1072px;top:548px">wx:for="<i class="ye">{</i><i class="pu">{</i><i class="nv">todayQuote.categories</i><i class="pu" style="color:#d98ad8">}</i><i class="ye">}</i>"</div>
<div class="t code" style="left:1072px;top:588px">wx:key=<i class="or">"id"</i></div>
<div class="t code" style="left:1072px;top:628px">catchtap=<i class="or">"onTagTap"</i></div>

<!-- devtools text -->
<div class="t" style="left:901px;top:667px;font-size:13px;color:#777">构建</div>
<div class="t" style="left:954px;top:667px;font-size:13px;color:#333">调试器</div>
<div class="t c" style="left:1015px;top:667px;font-size:12px;color:#444">5</div>
<div class="t" style="left:1053px;top:667px;font-size:13px;color:#777">问题</div>
<div class="t" style="left:1104px;top:667px;font-size:13px;color:#777">输出</div>
<div class="t" style="left:1158px;top:667px;font-size:13px;color:#777">终端</div>
<div class="t" style="left:1210px;top:667px;font-size:13px;color:#777">代码质量</div>

<div class="t dt" style="left:942px;top:702px">Wxml</div>
<div class="t dt" style="left:1009px;top:702px;color:#333">Console</div>
<div class="t dt" style="left:1092px;top:702px">Sources</div>
<div class="t dt" style="left:1173px;top:702px;font-size:15.4px">Network</div>
<div class="t dt" style="left:1260px;top:702px">Performance</div>
<div class="t dt" style="left:1372px;top:702px">Memory</div>
<div class="t dt" style="left:1457px;top:702px">AppData</div>
<div class="t dt" style="left:1544px;top:702px">Storage</div>
<div class="t" style="left:1620px;top:700px;font-size:19px;color:#444">»</div>
<div class="t dt" style="left:1752px;top:702px">5</div>
<div class="t dt" style="left:1782px;top:702px">16</div>

<div class="t dt" style="left:966px;top:736px">top</div>
<div class="t" style="left:1199px;top:736px;font-size:14.5px;color:#888">Filter</div>
<div class="t" style="left:1419px;top:736px;font-size:14.500px;color:#b0b0b0">Default levels</div>
<div class="t" style="left:1809px;top:736px;font-size:14.500px;color:#999">29 hidden</div>

<div class="t ct" style="left:940px;top:771px">29 messages</div>
<div class="t ct" style="left:940px;top:801px">26 user messages</div>
<div class="t ct" style="left:940px;top:831px;color:#777">No errors</div>
<div class="t ct" style="left:940px;top:861px">5 warnings</div>
<div class="t ct" style="left:940px;top:891px">23 info</div>
<div class="t ct" style="left:940px;top:921px">1 verbose</div>

<div class="t" style="left:1212px;top:769px;font-family:'Liberation Mono',monospace;font-size:13.600px;color:#444">Some messages have been moved to the Issues panel.</div>
<div class="t" style="left:1793px;top:769px;font-family:'Liberation Mono',monospace;font-size:13.600px;color:#444;text-decoration:underline">View issues</div>

<div class="t ct" style="left:923px;top:969px;color:#333">Console</div>
<div class="t ct" style="left:1000px;top:969px;color:#666">Task</div>
<div class="t ct" style="left:1053px;top:969px;color:#666">Issues</div>

<div class="t z" style="left:1608px;top:1003px;font-size:14px;color:#888">行 3，列 16</div>
<div class="t z" style="left:1706px;top:1003px;font-size:14px;color:#888">空格: 2</div>
<div class="t z" style="left:1772px;top:1003px;font-size:14px;color:#888">UTF-8</div>
<div class="t z" style="left:1831px;top:1003px;font-size:14px;color:#888">LF</div>
<div class="t z" style="left:1866px;top:1003px;font-size:14px;color:#888">WXML</div>
<div class="t" style="left:1632px;top:980px;font-size:24.4px;color:#333;text-shadow:1px 1px 0 #fff,-1px -1px 0 #fff;letter-spacing:.2px">掘金技术社区 @ 恒路之</div>
</body></html>
